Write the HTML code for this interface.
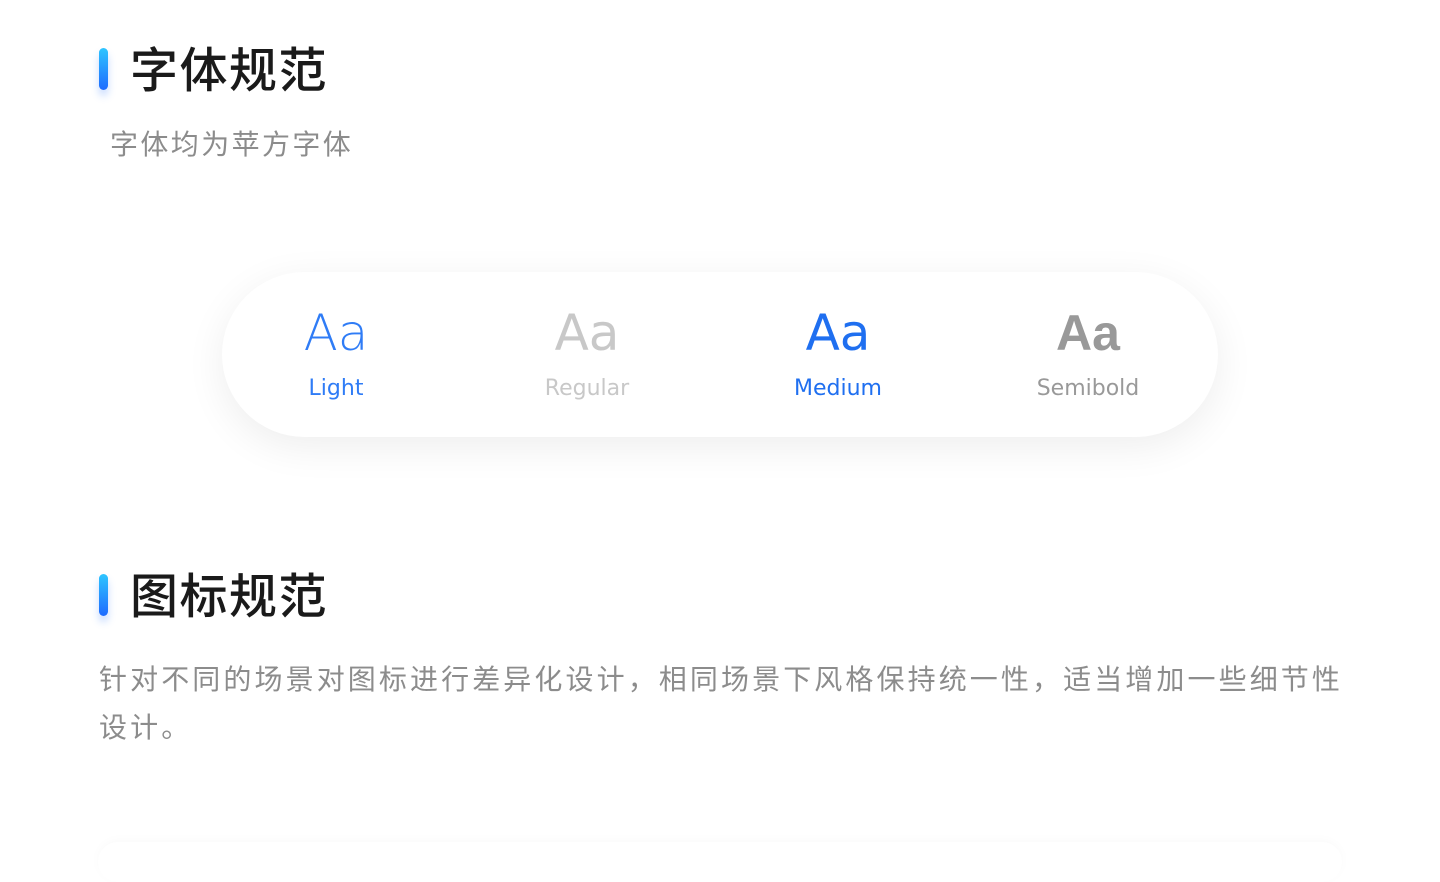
<!DOCTYPE html>
<html><head><meta charset="utf-8"><style>
body{margin:0;width:1440px;height:851px;background:#fff;overflow:hidden;position:relative;font-family:"Liberation Sans","Noto Sans CJK SC",sans-serif}
.bar{position:absolute;left:99px;width:9px;height:42px;border-radius:5px;background:linear-gradient(#2ec5ff,#1e6bff);box-shadow:0 6px 8px rgba(30,110,255,.25)}
.h{position:absolute;left:130px;font-size:48px;font-weight:500;color:#1a1a1a;line-height:1;letter-spacing:1.5px}
.sub{position:absolute;color:#8c8c8c;font-size:28px;line-height:48px;white-space:nowrap}
.card{position:absolute;left:222px;top:272px;width:996px;height:165px;border-radius:83px;background:#fff;box-shadow:0 10px 40px rgba(0,0,0,.07)}
.col{position:absolute;top:304px;width:250px;text-align:center;font-family:"DejaVu Sans","Liberation Sans",sans-serif}
.col .a{font-size:50px;line-height:58px}
.col .l{font-size:22px;margin-top:12px;line-height:30px}
.bot{position:absolute;left:98px;top:842px;width:1244px;height:40px;border-radius:20px;box-shadow:0 -2px 10px rgba(0,0,0,.025)}
</style></head><body>
<div class="bar" style="top:48px"></div>
<div class="h" style="top:48px">字体规范</div>
<div class="sub" style="left:110px;top:121px;letter-spacing:2.4px">字体均为苹方字体</div>
<div class="card"></div>
<div class="col" style="left:211px;color:#2f7cf6"><div class="a" style="font-weight:200">Aa</div><div class="l">Light</div></div>
<div class="col" style="left:462px;color:#c8c8c8"><div class="a">Aa</div><div class="l">Regular</div></div>
<div class="col" style="left:713px;color:#1f6ff0"><div class="a" style="font-weight:500">Aa</div><div class="l">Medium</div></div>
<div class="col" style="left:963px;color:#999"><div class="a" style="font-family:'Liberation Sans',sans-serif;font-weight:bold">Aa</div><div class="l">Semibold</div></div>
<div class="bar" style="top:574px"></div>
<div class="h" style="top:574px">图标规范</div>
<div class="sub" style="left:99px;top:656px;letter-spacing:3.1px">针对不同的场景对图标进行差异化设计，相同场景下风格保持统一性，适当增加一些细节性<br>设计。</div>
<div class="bot"></div>
</body></html>
